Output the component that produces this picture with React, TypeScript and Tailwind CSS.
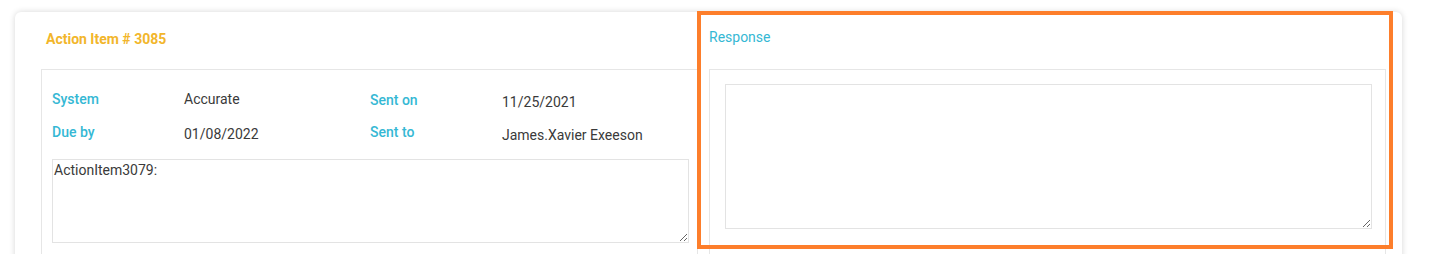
import React from "react";

export default function App() {
  const font = { fontFamily: "Roboto, 'Noto Sans', Arial, sans-serif" };
  return (
    <div className="relative h-[254px] w-[1430px] overflow-hidden bg-white pl-[15px] pt-[12px]" style={font}>
      <div className="flex w-[1387px] rounded-md bg-white pl-[26px] pr-[16px] pb-[40px] shadow-[0_0_6px_rgba(0,0,0,0.16)]">
        {/* Left column */}
        <div className="flex w-[657px] flex-col">
          <div className="h-[57px] pl-[5px] pt-[15px]">
            <span className="text-[14px] font-bold leading-[20px] text-[#f2b62b]">Action Item # 3085</span>
          </div>
          <div className="h-[220px] border border-[#e6e6e6] pl-[10px] pr-[8px] pt-[18px]">
            <div className="grid h-[34px] grid-cols-[132px_186px_132px_1fr] items-start text-[14px] leading-[20px]">
              <div className="pt-[1px] font-medium text-[#35b8d4]">System</div>
              <div className="pt-[1px] text-[#3a3a3a]">Accurate</div>
              <div className="pt-[2px] font-medium text-[#35b8d4]">Sent on</div>
              <div className="pt-[4px] text-[#3a3a3a]">11/25/2021</div>
            </div>
            <div className="grid h-[34px] grid-cols-[132px_186px_132px_1fr] items-start text-[14px] leading-[20px]">
              <div className="font-medium text-[#35b8d4]">Due by</div>
              <div className="pt-[2px] text-[#3a3a3a]">01/08/2022</div>
              <div className="font-medium text-[#35b8d4]">Sent to</div>
              <div className="pt-[3px] text-[#3a3a3a]">James.Xavier Exeeson</div>
            </div>
            <textarea
              className="mt-[3px] block h-[84px] w-full resize border border-[#e3e3e3] px-[1px] py-0 text-[14px] leading-normal text-[#3a3a3a] outline-none"
              style={font}
              defaultValue="ActionItem3079:"
            />
          </div>
        </div>
        {/* Right column */}
        <div className="ml-[11px] flex flex-1 flex-col">
          <div className="h-[57px] pt-[13px]">
            <span className="text-[14px] leading-[20px] text-[#35b8d4]">Response</span>
          </div>
          <div className="h-[220px] border border-[#e6e6e6] pl-[15px] pr-[13px] pt-[14px]">
            <textarea
              className="block h-[145px] w-full resize border border-[#e3e3e3] p-[2px] text-[14px] text-[#3a3a3a] outline-none"
              style={font}
            />
          </div>
        </div>
      </div>
      {/* Annotation highlight */}
      <div className="pointer-events-none absolute left-[697px] top-[11px] h-[238px] w-[696px] border-[4px] border-[#fd7e2b]" />
    </div>
  );
}
